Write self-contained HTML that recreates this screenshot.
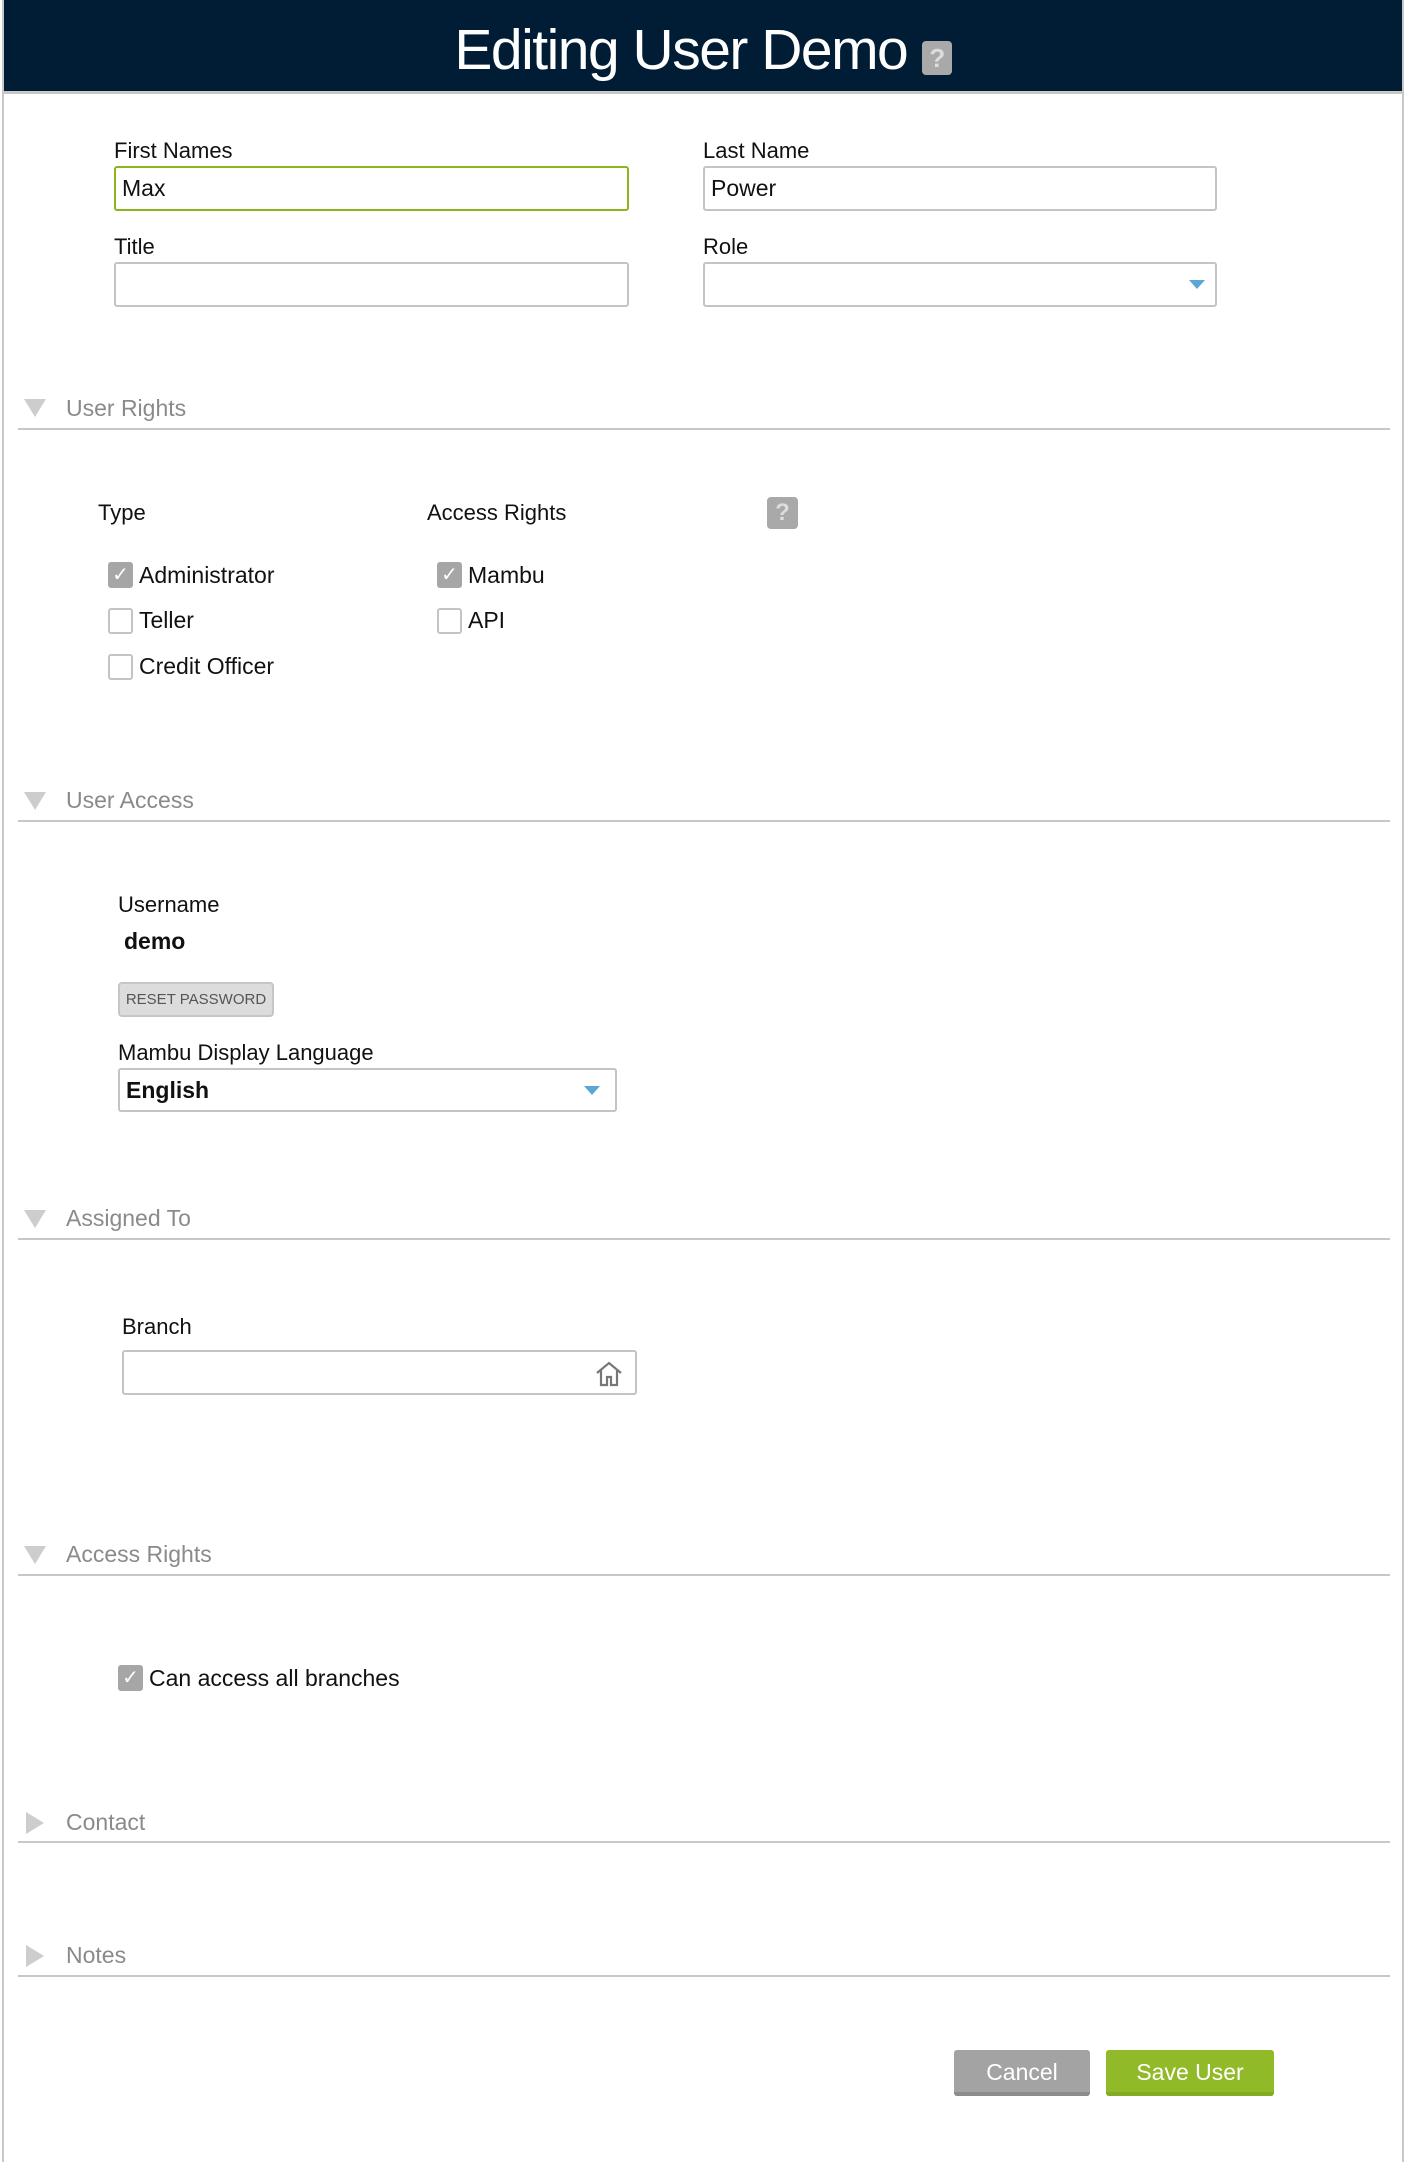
<!DOCTYPE html>
<html><head><meta charset="utf-8"><style>
*{margin:0;padding:0;box-sizing:border-box}
body{width:1406px;height:2162px;background:#fff;font-family:"Liberation Sans",sans-serif;position:relative;overflow:hidden;color:#111}
.abs{position:absolute}
.frame{position:absolute;left:2px;top:0;width:1402px;height:2162px;border-left:2px solid #c8c8c8;border-right:2px solid #c8c8c8}
.hdr{position:absolute;left:4px;top:0;width:1398px;height:94px;background:#001d35;border-bottom:3px solid #c8c8c8}
.hdr h1{position:absolute;left:0;right:0;top:20px;text-align:center;color:#fff;font-weight:normal;font-size:57px;letter-spacing:-1.5px;line-height:60px}
.q{display:inline-block;background:#a9a9a9;color:#ddd;border-radius:4px;font-weight:bold;text-align:center}
.lbl{position:absolute;font-size:22px;line-height:26px;color:#111}
.inp{position:absolute;border:2px solid #c4c4c4;border-radius:3px;background:#fff;font-size:23px;line-height:40px;padding-left:6px}
.arrow{position:absolute;width:0;height:0;border-left:8px solid transparent;border-right:8px solid transparent;border-top:9px solid #5aa7d6}
.sec{position:absolute;left:18px;width:1372px;height:2px;background:#c8c8c8}
.sech{position:absolute;left:66px;font-size:23px;color:#8a8a8a;line-height:28px}
.tri{position:absolute;left:24px;width:0;height:0;border-left:11px solid transparent;border-right:11px solid transparent;border-top:18px solid #cdcdcd}
.trir{position:absolute;left:26px;width:0;height:0;border-top:11px solid transparent;border-bottom:11px solid transparent;border-left:18px solid #cdcdcd}
.cb{position:absolute;width:25px;height:26px;border:2px solid #c4c4c4;border-radius:3px;background:#fff}
.cb.on{background:#a6a6a6;border-color:#a6a6a6;color:#fff;font-size:20px;line-height:22px;text-align:center}
.cbt{position:absolute;font-size:23px;line-height:28px}
.btn{position:absolute;color:#fff;font-size:23px;text-align:center;border-radius:3px}
</style></head><body>
<div class="frame"></div>
<div class="hdr"><h1>Editing User Demo <span class="q" style="width:30px;height:34px;font-size:26px;line-height:34px;vertical-align:2px">?</span></h1></div>

<div class="lbl" style="left:114px;top:138px">First Names</div>
<div class="inp" style="left:114px;top:166px;width:515px;height:45px;border-color:#8ab51b">Max</div>
<div class="lbl" style="left:703px;top:138px">Last Name</div>
<div class="inp" style="left:703px;top:166px;width:514px;height:45px">Power</div>
<div class="lbl" style="left:114px;top:234px">Title</div>
<div class="inp" style="left:114px;top:262px;width:515px;height:45px"></div>
<div class="lbl" style="left:703px;top:234px">Role</div>
<div class="inp" style="left:703px;top:262px;width:514px;height:45px"></div>
<div class="arrow" style="left:1189px;top:280px"></div>

<div class="tri" style="top:399px"></div><div class="sech" style="top:394px">User Rights</div><div class="sec" style="top:428px"></div>
<div class="lbl" style="left:98px;top:500px">Type</div>
<div class="lbl" style="left:427px;top:500px">Access Rights</div>
<div class="q abs" style="left:767px;top:497px;width:31px;height:32px;font-size:24px;line-height:32px">?</div>
<div class="cb on" style="left:108px;top:562px">✓</div><div class="cbt" style="left:139px;top:561px">Administrator</div>
<div class="cb" style="left:108px;top:608px"></div><div class="cbt" style="left:139px;top:606px">Teller</div>
<div class="cb" style="left:108px;top:654px"></div><div class="cbt" style="left:139px;top:652px">Credit Officer</div>
<div class="cb on" style="left:437px;top:562px">✓</div><div class="cbt" style="left:468px;top:561px">Mambu</div>
<div class="cb" style="left:437px;top:608px"></div><div class="cbt" style="left:468px;top:606px">API</div>

<div class="tri" style="top:792px"></div><div class="sech" style="top:786px">User Access</div><div class="sec" style="top:820px"></div>
<div class="lbl" style="left:118px;top:892px">Username</div>
<div class="lbl" style="left:124px;top:928px;font-size:23px;font-weight:bold;color:#111">demo</div>
<div class="abs" style="left:118px;top:982px;width:156px;height:35px;background:#dcdcdc;border:2px solid #c6c6c6;border-radius:4px;font-size:15px;color:#555;line-height:31px;text-align:center">RESET PASSWORD</div>
<div class="lbl" style="left:118px;top:1040px">Mambu Display Language</div>
<div class="inp" style="left:118px;top:1068px;width:499px;height:44px;font-weight:bold">English</div>
<div class="arrow" style="left:584px;top:1086px"></div>

<div class="tri" style="top:1210px"></div><div class="sech" style="top:1204px">Assigned To</div><div class="sec" style="top:1238px"></div>
<div class="lbl" style="left:122px;top:1314px">Branch</div>
<div class="inp" style="left:122px;top:1350px;width:515px;height:45px"></div>
<svg class="abs" style="left:594px;top:1360px" width="30" height="28" viewBox="0 0 30 28"><path d="M3 13 L15 3 L27 13 M7 10 V25 H13 V17 H17 V25 H23 V10" fill="none" stroke="#777" stroke-width="2.2"/></svg>

<div class="tri" style="top:1546px"></div><div class="sech" style="top:1540px">Access Rights</div><div class="sec" style="top:1574px"></div>
<div class="cb on" style="left:118px;top:1665px">✓</div><div class="cbt" style="left:149px;top:1664px">Can access all branches</div>

<div class="trir" style="top:1812px"></div><div class="sech" style="top:1808px">Contact</div><div class="sec" style="top:1841px"></div>
<div class="trir" style="top:1945px"></div><div class="sech" style="top:1941px">Notes</div><div class="sec" style="top:1975px"></div>

<div class="btn" style="left:954px;top:2050px;width:136px;height:46px;background:#a3a3a3;border-bottom:4px solid #8c8c8c;line-height:44px">Cancel</div>
<div class="btn" style="left:1106px;top:2050px;width:168px;height:46px;background:#91ba28;border-bottom:4px solid #83aa22;line-height:44px">Save User</div>
</body></html>
